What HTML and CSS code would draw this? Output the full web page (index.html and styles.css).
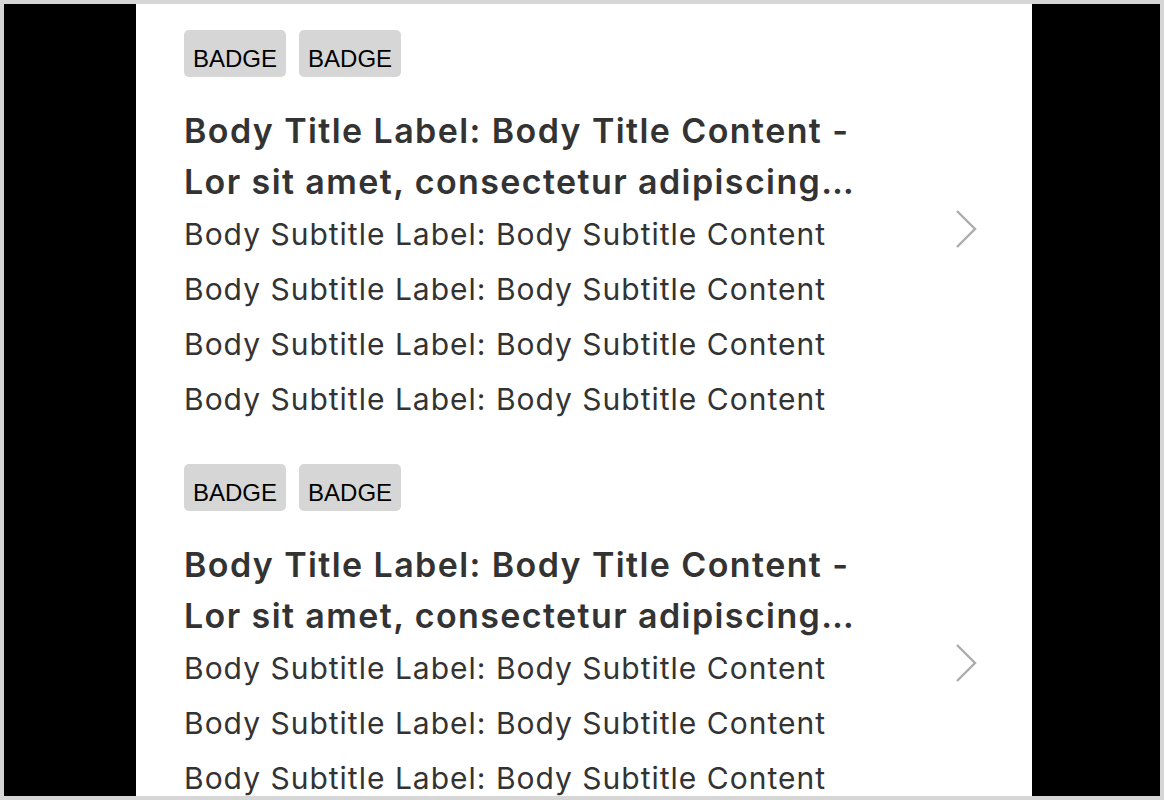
FILE: index.html
```html
<!DOCTYPE html>
<html lang="en">
<head>
<meta charset="utf-8">
<title>List</title>
<link rel="stylesheet" href="styles.css">
</head>
<body>
<div class="frame">
  <div class="side"></div>
  <main class="panel">
    <section class="item">
      <div class="content">
        <div class="badges">
          <span class="badge">BADGE</span>
          <span class="badge">BADGE</span>
        </div>
        <h2 class="title"><span class="line">Body Title Label: Body Title Content -</span><span class="line">Lor sit amet, consectetur adipiscing…</span></h2>
        <p class="sub">Body Subtitle Label: Body Subtitle Content</p>
        <p class="sub">Body Subtitle Label: Body Subtitle Content</p>
        <p class="sub">Body Subtitle Label: Body Subtitle Content</p>
        <p class="sub">Body Subtitle Label: Body Subtitle Content</p>
      </div>
      <svg class="chevron" width="24" height="40" viewBox="0 0 24 40" aria-hidden="true"><polyline points="3,2 21,20 3,38" fill="none" stroke="#acacac" stroke-width="2.4"/></svg>
    </section>
    <section class="item">
      <div class="content">
        <div class="badges">
          <span class="badge">BADGE</span>
          <span class="badge">BADGE</span>
        </div>
        <h2 class="title"><span class="line">Body Title Label: Body Title Content -</span><span class="line">Lor sit amet, consectetur adipiscing…</span></h2>
        <p class="sub">Body Subtitle Label: Body Subtitle Content</p>
        <p class="sub">Body Subtitle Label: Body Subtitle Content</p>
        <p class="sub">Body Subtitle Label: Body Subtitle Content</p>
        <p class="sub">Body Subtitle Label: Body Subtitle Content</p>
      </div>
      <svg class="chevron" width="24" height="40" viewBox="0 0 24 40" aria-hidden="true"><polyline points="3,2 21,20 3,38" fill="none" stroke="#acacac" stroke-width="2.4"/></svg>
    </section>
  </main>
  <div class="side"></div>
</div>
</body>
</html>
```

FILE: styles.css
```css
html, body {
  margin: 0;
  padding: 0;
}

body {
  width: 1164px;
  height: 800px;
  box-sizing: border-box;
  border: 4px solid #d6d6d6;
  background: #000;
  overflow: hidden;
  font-family: "Liberation Sans", Arial, sans-serif;
  color: #333;
}

.frame {
  display: grid;
  grid-template-columns: 132px 896px 1fr;
  height: 100%;
}

.side {
  background: #000;
}

.panel {
  background: #fff;
  padding: 26px 0 0 48px;
  display: flex;
  flex-direction: column;
  gap: 37px;
  overflow: hidden;
}

.item {
  display: flex;
  align-items: center;
  padding-right: 54px;
}

.content {
  flex: 1;
  min-width: 0;
}

.badges {
  display: flex;
  gap: 13px;
}

.badge {
  display: block;
  background: #d6d6d6;
  color: #000;
  border-radius: 5px;
  font-size: 24px;
  line-height: 27px;
  padding: 15px 9px 5px;
}

.title {
  margin: 28px 0 0;
  font-family: Inter, "Liberation Sans", sans-serif;
  font-size: 34px;
  line-height: 51px;
  font-weight: 600;
  letter-spacing: 1.4px;
  color: #333;
}

.line {
  display: block;
  white-space: nowrap;
}

.sub {
  margin: 0;
  font-family: Inter, "Liberation Sans", sans-serif;
  font-size: 30px;
  line-height: 55px;
  letter-spacing: 1px;
  color: #333;
  white-space: nowrap;
}

.chevron {
  flex: none;
  display: block;
}
```
